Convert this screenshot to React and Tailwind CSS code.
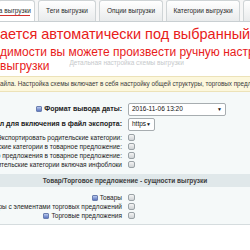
import React from 'react';

const TABS = [
  { label: 'Схема выгрузки', active: true, w: 'w-[37px]', cut: true },
  { label: 'Теги выгрузки', w: 'w-[58px]' },
  { label: 'Опции выгрузки', w: 'w-[64px]' },
  { label: 'Категории выгрузки', w: 'w-[74px]' },
  { label: 'Ещё', w: 'w-[40px]' },
];

function Help() {
  return (
    <span className="inline-block w-[6px] h-[6px] mr-[2px] align-[-1px] rounded-[1px] border border-[#6b7fb0] bg-gradient-to-b from-[#b9c8ec] to-[#5d76c0]" />
  );
}

function Check() {
  return <span className="block w-[7px] h-[7px] rounded-[2px] border border-[#9aa2a6] bg-gradient-to-b from-[#f4f4f4] to-[#cfd3d5]" />;
}

function Row({ label, help, bold, children, h = 'h-[9px]' }) {
  return (
    <div className={`grid grid-cols-[125px_1fr] items-center ${h}`}>
      <div className={`flex justify-end items-center whitespace-nowrap pr-[3px] text-[#222] ${bold ? 'font-bold text-[7px]' : 'text-[6.5px]'}`}>
        {help && <Help />}
        {label}
      </div>
      <div className="flex items-center pl-[3px]">{children}</div>
    </div>
  );
}

function Select({ value, w }) {
  return (
    <div className={`${w} h-[13px] flex items-center justify-between px-[3px] border border-[#a7adb0] rounded-[2px] bg-white text-[6.5px] text-[#111]`}>
      <span>{value}</span>
      <span className="text-[5px] leading-none">▼</span>
    </div>
  );
}

export default function App() {
  return (
    <div className="w-[250px] h-[250px] overflow-hidden bg-white font-['Liberation_Sans',Arial,sans-serif]">
      {/* tabs */}
      <div className="flex items-end gap-[3px] h-[22px] border-b border-[#c9cfd2] bg-[#f6f6f6] whitespace-nowrap">
        {TABS.map((t) => (
          <div
            key={t.label}
            className={`shrink-0 ${t.w} h-[21px] flex items-center ${t.cut ? 'justify-end pr-[3px] -ml-[2px]' : 'justify-center'} overflow-hidden rounded-t-[3px] border border-b-0 border-[#cfd4d6] text-[6.5px] text-[#2b2b2b] ${t.active ? 'bg-white relative' : 'bg-gradient-to-b from-white to-[#e9ebec]'}`}
          >
            {t.label}
            {t.active && <span className="absolute left-0 right-[4px] bottom-[5px] h-[1px] bg-[#d2322d]" />}
          </div>
        ))}
      </div>

      {/* red notes */}
      <div className="text-[#e8201a] whitespace-nowrap">
        <div className="mt-[4px] text-[14.5px] leading-[17px]">ается автоматически под выбранный</div>
        <div className="mt-[2px] text-[12px] leading-[14px]">димости вы можете произвести ручную настройку схемы</div>
        <div className="flex items-start h-[15px]">
          <span className="text-[12px] leading-[14px]">выгрузки</span>
          <span className="ml-[20px] mt-[-1px] text-[6.5px] text-[#c6c9cb]">Детальная настройка схемы выгрузки</span>
        </div>
      </div>

      {/* hint */}
      <div className="mt-[2px] h-[16px] flex items-center border-y border-[#ece2b8] bg-[#fcf7dc] text-[6.3px] text-[#3a3a3a] whitespace-nowrap">
        айла. Настройка схемы включает в себя настройку общей структуры, торговых предложений
      </div>

      {/* form */}
      <div className="bg-[#f5f9f9] border-b border-[#d5dcde] pt-[10px] pb-[4px]">
        <Row label="Формат вывода даты:" help bold h="h-[14px]">
          <Select value="2016-11-06 13:20" w="w-[98px]" />
        </Row>
        <div className="h-[1px]" />
        <Row label="Протокол для включения в файл экспорта:" bold h="h-[14px]">
          <Select value="https" w="w-[27px]" />
        </Row>
        <div className="h-[2px]" />
        <Row label="Экспортировать родительские категории:" help><Check /></Row>
        <Row label="Включать родительские категории в товарное предложение:"><Check /></Row>
        <Row label="Включать категории торгового предложения в товарное предложение:"><Check /></Row>
        <Row label="Экспортировать родительские категории включая инфоблоки"><Check /></Row>

        <div className="mt-[5px] h-[13px] flex items-center justify-center bg-[#e0e8ea] text-[6.5px] font-bold text-[#3c3c3c] whitespace-nowrap">
          Товар/Торговое предложение - сущности выгрузки
        </div>

        <div className="pt-[6px]">
          <Row label="Товары" help><Check /></Row>
          <Row label="Товары с элементами торговых предложений"><Check /></Row>
          <Row label="Торговые предложения" help><Check /></Row>
        </div>
      </div>
    </div>
  );
}
